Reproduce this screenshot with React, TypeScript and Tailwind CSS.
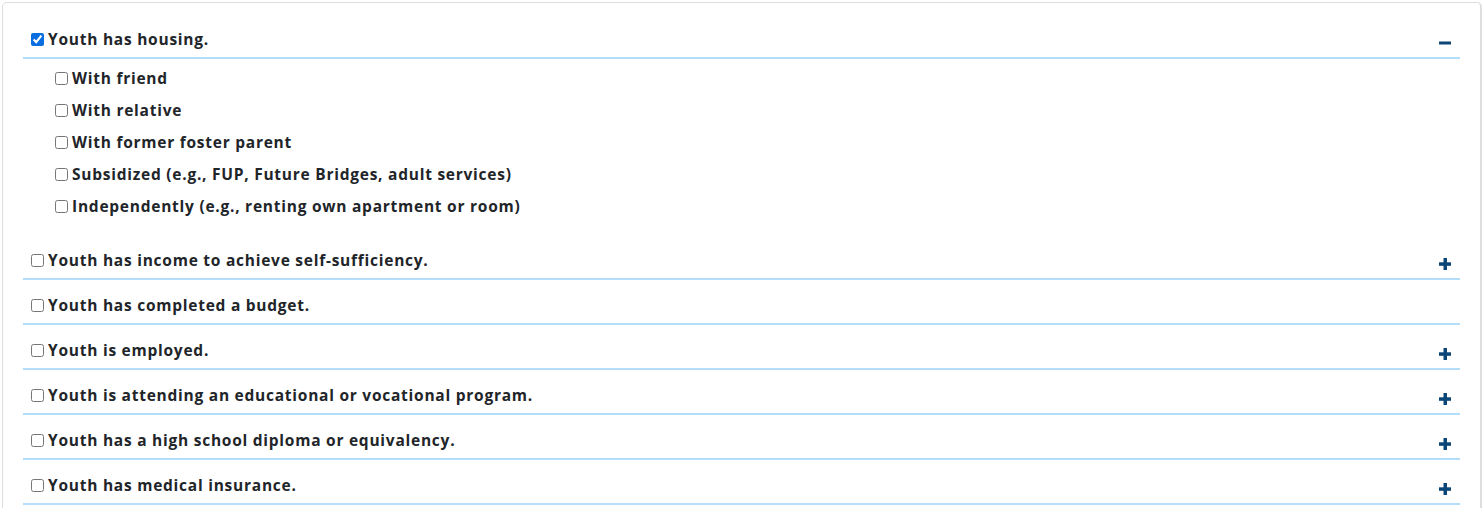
import type { ReactNode } from 'react';

// ── Checklist data ────────────────────────────────────────────────────────────

interface Goal {
  label: string;
  checked?: boolean;
  open?: boolean;
  expandable?: boolean;
  options?: string[];
}

const GOALS: Goal[] = [
  {
    label: 'Youth has housing.',
    checked: true,
    open: true,
    expandable: true,
    options: [
      'With friend',
      'With relative',
      'With former foster parent',
      'Subsidized (e.g., FUP, Future Bridges, adult services)',
      'Independently (e.g., renting own apartment or room)',
    ],
  },
  { label: 'Youth has income to achieve self-sufficiency.', expandable: true },
  { label: 'Youth has completed a budget.' },
  { label: 'Youth is employed.', expandable: true },
  { label: 'Youth is attending an educational or vocational program.', expandable: true },
  { label: 'Youth has a high school diploma or equivalency.', expandable: true },
  { label: 'Youth has medical insurance.', expandable: true },
];

// ── Toggle icons ──────────────────────────────────────────────────────────────

function PlusIcon() {
  return (
    <svg width="12" height="12" viewBox="0 0 12 12" className="shrink-0">
      <rect x="4.5" y="0" width="3.5" height="12" fill="#0b4677" />
      <rect x="0" y="4.3" width="12" height="3.5" fill="#0b4677" />
    </svg>
  );
}

function MinusIcon() {
  return (
    <svg width="12" height="12" viewBox="0 0 12 12" className="shrink-0">
      <rect x="0" y="4.5" width="12" height="3" fill="#0b4677" />
    </svg>
  );
}

// ── Rows ──────────────────────────────────────────────────────────────────────

function CheckLabel({ checked, children, className = '' }: { checked?: boolean; children: ReactNode; className?: string }) {
  return (
    <label className={`flex h-[20px] items-center gap-[4px] ${className}`}>
      <input
        type="checkbox"
        defaultChecked={checked}
        className="m-0 h-[13px] w-[13px] shrink-0 accent-[#0b6ee0]"
      />
      <span className="text-[15.5px] leading-[20px] font-bold tracking-[0.75px] text-[#212529]">{children}</span>
    </label>
  );
}

function GoalRow({ goal }: { goal: Goal }) {
  return (
    <div>
      <div className="flex h-[45px] items-start justify-between border-b-2 border-[#b3ddf8] pt-[15px] pl-[8px] pr-[9px]">
        <CheckLabel checked={goal.checked}>{goal.label}</CheckLabel>
        {goal.expandable && (
          <div className="flex h-[20px] items-end">{goal.open ? <MinusIcon /> : <PlusIcon />}</div>
        )}
      </div>
      {goal.open && goal.options && (
        <div className="flex flex-col gap-[12px] pt-[9px] pb-[19px] pl-[32px]">
          {goal.options.map((opt) => (
            <CheckLabel key={opt}>{opt}</CheckLabel>
          ))}
        </div>
      )}
    </div>
  );
}

export default function App() {
  return (
    <div className="min-h-[508px] bg-white pt-[2px] pl-[2px] pr-[1px]" style={{ fontFamily: '"Open Sans", "Liberation Sans", sans-serif' }}>
      <div className="min-h-[520px] rounded-[5px] border border-r-2 border-[#dcdee0] bg-white pt-[11px] pl-[20px] pr-[20px]">
        {GOALS.map((g) => (
          <GoalRow key={g.label} goal={g} />
        ))}
      </div>
    </div>
  );
}
